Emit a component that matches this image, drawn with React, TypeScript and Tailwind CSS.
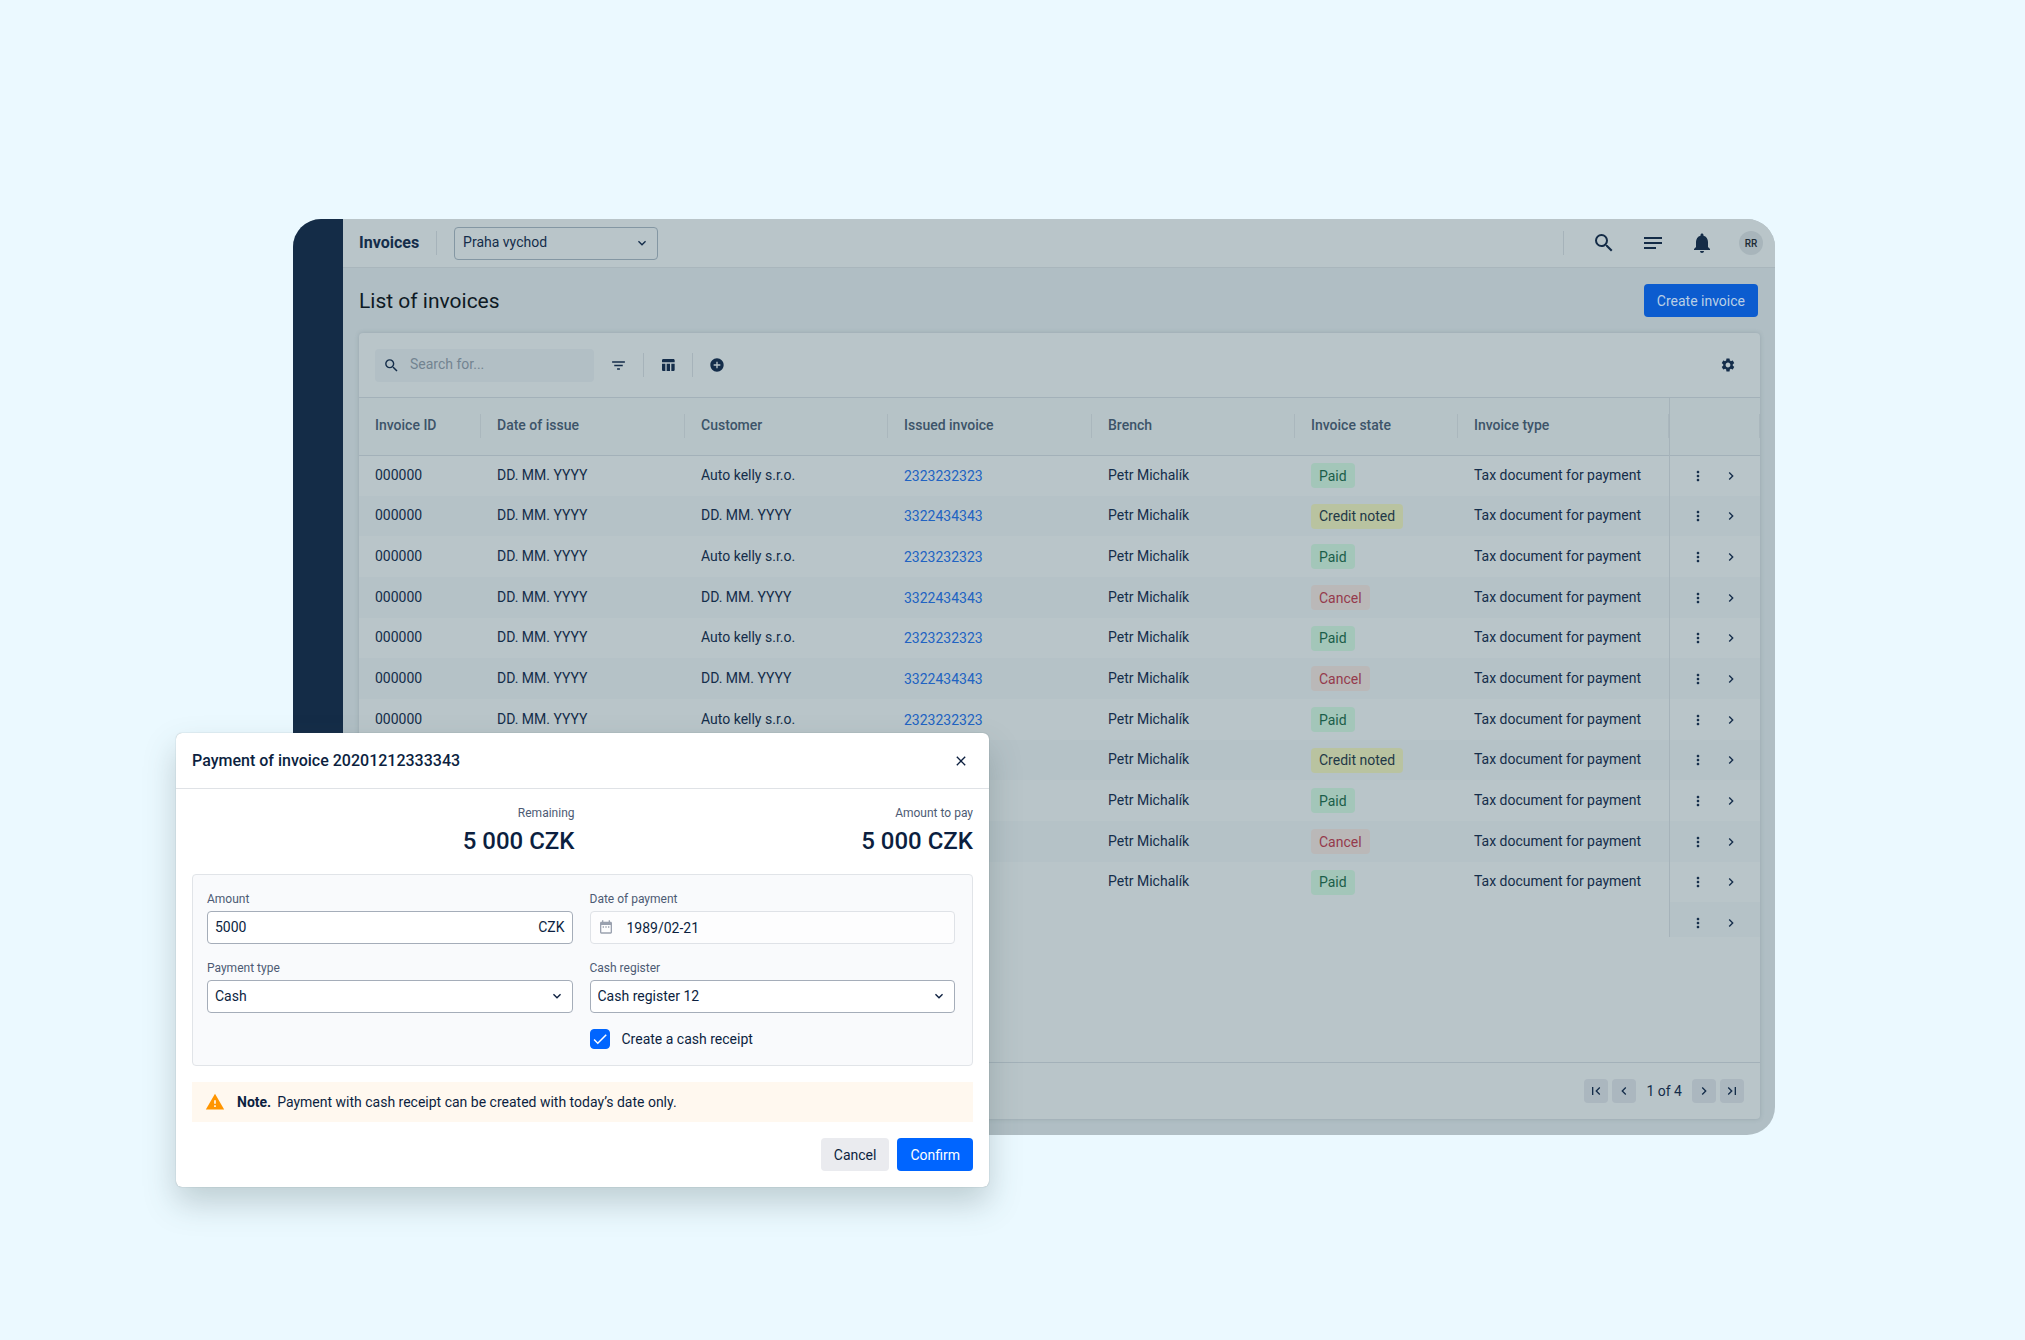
import React from 'react';
import {
  MdAddCircle,
  MdCheck,
  MdChevronLeft,
  MdChevronRight,
  MdClose,
  MdDateRange,
  MdExpandMore,
  MdFilterList,
  MdFirstPage,
  MdLastPage,
  MdMoreVert,
  MdNotes,
  MdNotifications,
  MdSearch,
  MdSettings,
  MdTableChart,
  MdWarning,
} from 'react-icons/md';

type InvoiceState = 'Paid' | 'Credit noted' | 'Cancel';

interface Invoice {
  id: string;
  date: string;
  customer: string;
  issued: string;
  branch: string;
  state: InvoiceState;
  type: string;
}

const states: InvoiceState[] = [
  'Paid', 'Credit noted', 'Paid', 'Cancel', 'Paid', 'Cancel',
  'Paid', 'Credit noted', 'Paid', 'Cancel', 'Paid',
];

const invoices: Invoice[] = states.map((state, i) => ({
  id: '000000',
  date: 'DD. MM. YYYY',
  customer: i % 2 === 0 ? 'Auto kelly s.r.o.' : 'DD. MM. YYYY',
  issued: i % 2 === 0 ? '2323232323' : '3322434343',
  branch: 'Petr Michalík',
  state,
  type: 'Tax document for payment',
}));

const columns = [
  { label: 'Invoice ID', width: 'w-[122px]' },
  { label: 'Date of issue', width: 'w-[204px]' },
  { label: 'Customer', width: 'w-[203px]' },
  { label: 'Issued invoice', width: 'w-[204px]' },
  { label: 'Brench', width: 'w-[203px]' },
  { label: 'Invoice state', width: 'w-[163px]' },
  { label: 'Invoice type', width: 'w-[211px]' },
];

const stateStyles: Record<InvoiceState, string> = {
  Paid: 'bg-[#a3c6b9] text-[#1b5e49]',
  'Credit noted': 'bg-[#b9c3a0] text-[#1f3847]',
  Cancel: 'bg-[#bab8b8] text-[#953a4c]',
};

const Divider: React.FC = () => <span className="h-6 w-px bg-[#a6b3ba]" />;

const TopBar: React.FC = () => (
  <header className="flex h-[49px] items-center border-b border-[#a9b6bc] bg-[#b9c5c9] pr-3 pl-4">
    <span className="mr-[17px] text-base font-bold">Invoices</span>
    <Divider />
    <div className="relative ml-[17px] w-[204px]">
      <select
        aria-label="Branch office"
        className="block h-[33px] w-full appearance-none rounded border border-[#8497a3] bg-transparent px-2 pb-0.5 text-sm"
      >
        <option>Praha vychod</option>
      </select>
      <MdExpandMore size={16} className="pointer-events-none absolute top-2 right-2" />
    </div>
    <div className="ml-auto flex items-center">
      <Divider />
      <div className="ml-7 flex items-center gap-[25px] text-[#142c47]">
        <button aria-label="Search"><MdSearch size={24} /></button>
        <button aria-label="Menu"><MdNotes size={24} /></button>
        <button aria-label="Notifications"><MdNotifications size={24} /></button>
        <button className="h-6 w-6 rounded-full bg-[#a8b5bb] text-[10px] font-medium text-[#1c2a35]">RR</button>
      </div>
    </div>
  </header>
);

const Toolbar: React.FC = () => (
  <div className="flex h-[65px] items-center border-b border-[#a3b1b9] px-4">
    <label className="flex h-[33px] w-[219px] items-center gap-2.5 rounded bg-[#b2bfc5] px-2">
      <MdSearch size={17} className="shrink-0" />
      <input
        type="text"
        aria-label="Search invoices"
        placeholder="Search for..."
        className="w-full bg-transparent pb-0.5 text-sm outline-none placeholder:text-[#728491]"
      />
    </label>
    <div className="ml-4 flex items-center gap-4">
      <button aria-label="Filter"><MdFilterList size={17} /></button>
      <Divider />
      <button aria-label="Columns"><MdTableChart size={16} /></button>
      <Divider />
      <button aria-label="Add"><MdAddCircle size={16} /></button>
    </div>
    <button aria-label="Table settings" className="mr-2 ml-auto"><MdSettings size={16} /></button>
  </div>
);

const RowActions: React.FC = () => (
  <div className="flex items-center gap-[17px] pl-5">
    <button aria-label="More"><MdMoreVert size={16} /></button>
    <button aria-label="Open"><MdChevronRight size={16} /></button>
  </div>
);

const InvoiceTable: React.FC = () => (
  <table className="w-full table-fixed border-collapse text-left text-sm">
    <thead>
      <tr className="h-[57px] border-b border-[#a3b1b9] bg-[#b6c3c7] text-[#3d5469]">
        {columns.map((col) => (
          <th key={col.label} className={`${col.width} p-0 font-medium`}>
            <div className="flex h-6 items-center border-r border-[#aab7bd] pb-0.5 pl-4">{col.label}</div>
          </th>
        ))}
        <th className="w-[91px] border-l border-[#a6b3ba] p-0" aria-label="Actions">
          <div className="h-6 border-r border-[#aab7bd]" />
        </th>
      </tr>
    </thead>
    <tbody>
      {invoices.map((inv, i) => (
        <tr key={i} className={`${i % 3 === 1 ? 'h-10' : 'h-[41px]'} ${i % 2 === 1 ? 'bg-[#b5c2c7]' : ''}`}>
          <td className="p-0 pb-0.5 pl-4">{inv.id}</td>
          <td className="p-0 pb-0.5 pl-4">{inv.date}</td>
          <td className="p-0 pb-0.5 pl-4">{inv.customer}</td>
          <td className="p-0 pl-4"><a href="#" className="text-[#2163c2]">{inv.issued}</a></td>
          <td className="p-0 pb-0.5 pl-4">{inv.branch}</td>
          <td className="p-0 pl-4">
            <span className={`inline-flex h-[25px] items-center rounded-sm px-2 align-middle ${stateStyles[inv.state]}`}>{inv.state}</span>
          </td>
          <td className="p-0 pb-0.5 pl-4 whitespace-nowrap">{inv.type}</td>
          <td className="border-l border-[#a6b3ba] p-0"><RowActions /></td>
        </tr>
      ))}
      <tr className="h-[35px]">
        <td colSpan={7} className="p-0" />
        <td className="border-l border-[#a6b3ba] bg-[#b5c2c7] p-0 pt-1.5"><RowActions /></td>
      </tr>
    </tbody>
  </table>
);

const PageButton: React.FC<{ label: string; children: React.ReactNode }> = ({ label, children }) => (
  <button aria-label={label} className="flex h-6 w-6 items-center justify-center rounded bg-[#abb7bf]">
    {children}
  </button>
);

const Pagination: React.FC = () => (
  <div className="flex h-[57px] items-center justify-end gap-1 border-t border-[#a3b1b9] px-4 text-sm">
    <PageButton label="First page"><MdFirstPage size={16} /></PageButton>
    <PageButton label="Previous page"><MdChevronLeft size={16} /></PageButton>
    <span className="px-1.5">1 of 4</span>
    <PageButton label="Next page"><MdChevronRight size={16} /></PageButton>
    <PageButton label="Last page"><MdLastPage size={16} /></PageButton>
  </div>
);

const Total: React.FC<{ label: string; value: string }> = ({ label, value }) => (
  <div className="text-right">
    <div className="text-xs leading-4 text-[#4d5b74]">{label}</div>
    <div className="mt-1 text-2xl leading-8 font-medium">{value}</div>
  </div>
);

const Field: React.FC<{ id: string; label: string; children: React.ReactNode }> = ({ id, label, children }) => (
  <div>
    <label htmlFor={id} className="mb-1 block text-xs leading-4 text-[#4d5b74]">{label}</label>
    <div className="relative">{children}</div>
  </div>
);

const SelectField: React.FC<{ id: string; label: string; value: string }> = ({ id, label, value }) => (
  <Field id={id} label={label}>
    <select id={id} className="block h-[33px] w-full appearance-none rounded border border-[#a5adb9] bg-white px-[7px] pb-0.5 text-sm">
      <option>{value}</option>
    </select>
    <MdExpandMore size={16} className="pointer-events-none absolute top-2 right-2" />
  </Field>
);

const PaymentDialog: React.FC = () => (
  <section
    role="dialog"
    aria-labelledby="payment-title"
    className="absolute top-[514px] -left-[117px] w-[813px] rounded-md bg-white text-[#0c1f3f] shadow-[0_0_1px_rgba(50,70,75,0.5),0_16px_32px_rgba(60,85,85,0.26)]"
  >
    <div className="flex h-14 items-center justify-between border-b border-[#dfe2e6] px-4">
      <h2 id="payment-title" className="text-base font-medium">Payment of invoice 20201212333343</h2>
      <button aria-label="Close" className="mr-1"><MdClose size={16} /></button>
    </div>
    <div className="p-4">
      <div className="grid grid-cols-2 gap-4">
        <Total label="Remaining" value="5 000 CZK" />
        <Total label="Amount to pay" value="5 000 CZK" />
      </div>
      <div className="mt-[17px] grid grid-cols-2 gap-x-[17px] gap-y-4 rounded-sm border border-[#e1e4e8] bg-[#f9fafc] py-4 pr-[17px] pl-3.5">
        <Field id="amount" label="Amount">
          <input
            id="amount"
            type="text"
            defaultValue="5000"
            className="block h-[33px] w-full rounded border border-[#a5adb9] bg-white pr-12 pb-0.5 pl-[7px] text-sm"
          />
          <span className="absolute top-1.5 right-2 text-sm">CZK</span>
        </Field>
        <Field id="date" label="Date of payment">
          <input
            id="date"
            type="text"
            defaultValue="1989/02-21"
            className="block h-[33px] w-full rounded border border-[#dfe2e7] bg-[#fdfdfe] pl-9 text-sm"
          />
          <MdDateRange size={16} className="absolute top-2 left-2 text-[#9aa1af]" />
        </Field>
        <SelectField id="payment-type" label="Payment type" value="Cash" />
        <SelectField id="cash-register" label="Cash register" value="Cash register 12" />
        <label className="col-start-2 flex items-center gap-3 text-sm leading-5">
          <span className="relative">
            <input
              type="checkbox"
              defaultChecked
              className="peer block h-5 w-5 appearance-none rounded border border-[#a5adb9] bg-white checked:border-[#0065ff] checked:bg-[#0065ff]"
            />
            <MdCheck size={18} className="absolute top-px left-px hidden text-white peer-checked:block" />
          </span>
          Create a cash receipt
        </label>
      </div>
      <div className="mt-4 flex h-10 items-center bg-[#fff8ef] px-[13px] text-sm">
        <MdWarning size={20} className="mr-3 text-[#ff9500]" />
        <p><strong className="mr-1.5 font-bold">Note.</strong>Payment with cash receipt can be created with today’s date only.</p>
      </div>
      <div className="mt-4 flex justify-end gap-2 text-sm">
        <button className="h-[33px] rounded bg-[#eaebef] px-[13px]">Cancel</button>
        <button className="h-[33px] rounded bg-[#0065ff] px-[13px] text-white">Confirm</button>
      </div>
    </div>
  </section>
);

export default function App() {
  return (
    <main className="min-h-screen bg-[#ebf9ff] pt-[219px] pr-[250px] pb-[204px] pl-[293px] font-[Roboto,sans-serif] text-[#142d4a]">
      <div className="relative">
        <div className="flex overflow-hidden rounded-[28px] bg-[#b0bec4]">
          <aside className="w-[50px] shrink-0 bg-[#142c47]" />
          <div className="min-w-0 flex-1">
            <TopBar />
            <div className="pr-[15px] pb-4 pl-4">
              <div className="flex h-[65px] items-center justify-between pr-0.5">
                <h1 className="text-[21px] leading-7 text-[#0e1a24]">List of invoices</h1>
                <button className="h-[33px] rounded bg-[#0c5ccf] px-[13px] text-sm text-[#b9cfe6]">Create invoice</button>
              </div>
              <div className="flex min-h-[786px] flex-col rounded bg-[#b9c5c9] shadow-[0_0_4px_rgba(70,95,105,0.25)]">
                <Toolbar />
                <div className="flex-1">
                  <InvoiceTable />
                </div>
                <Pagination />
              </div>
            </div>
          </div>
        </div>
        <PaymentDialog />
      </div>
    </main>
  );
}
